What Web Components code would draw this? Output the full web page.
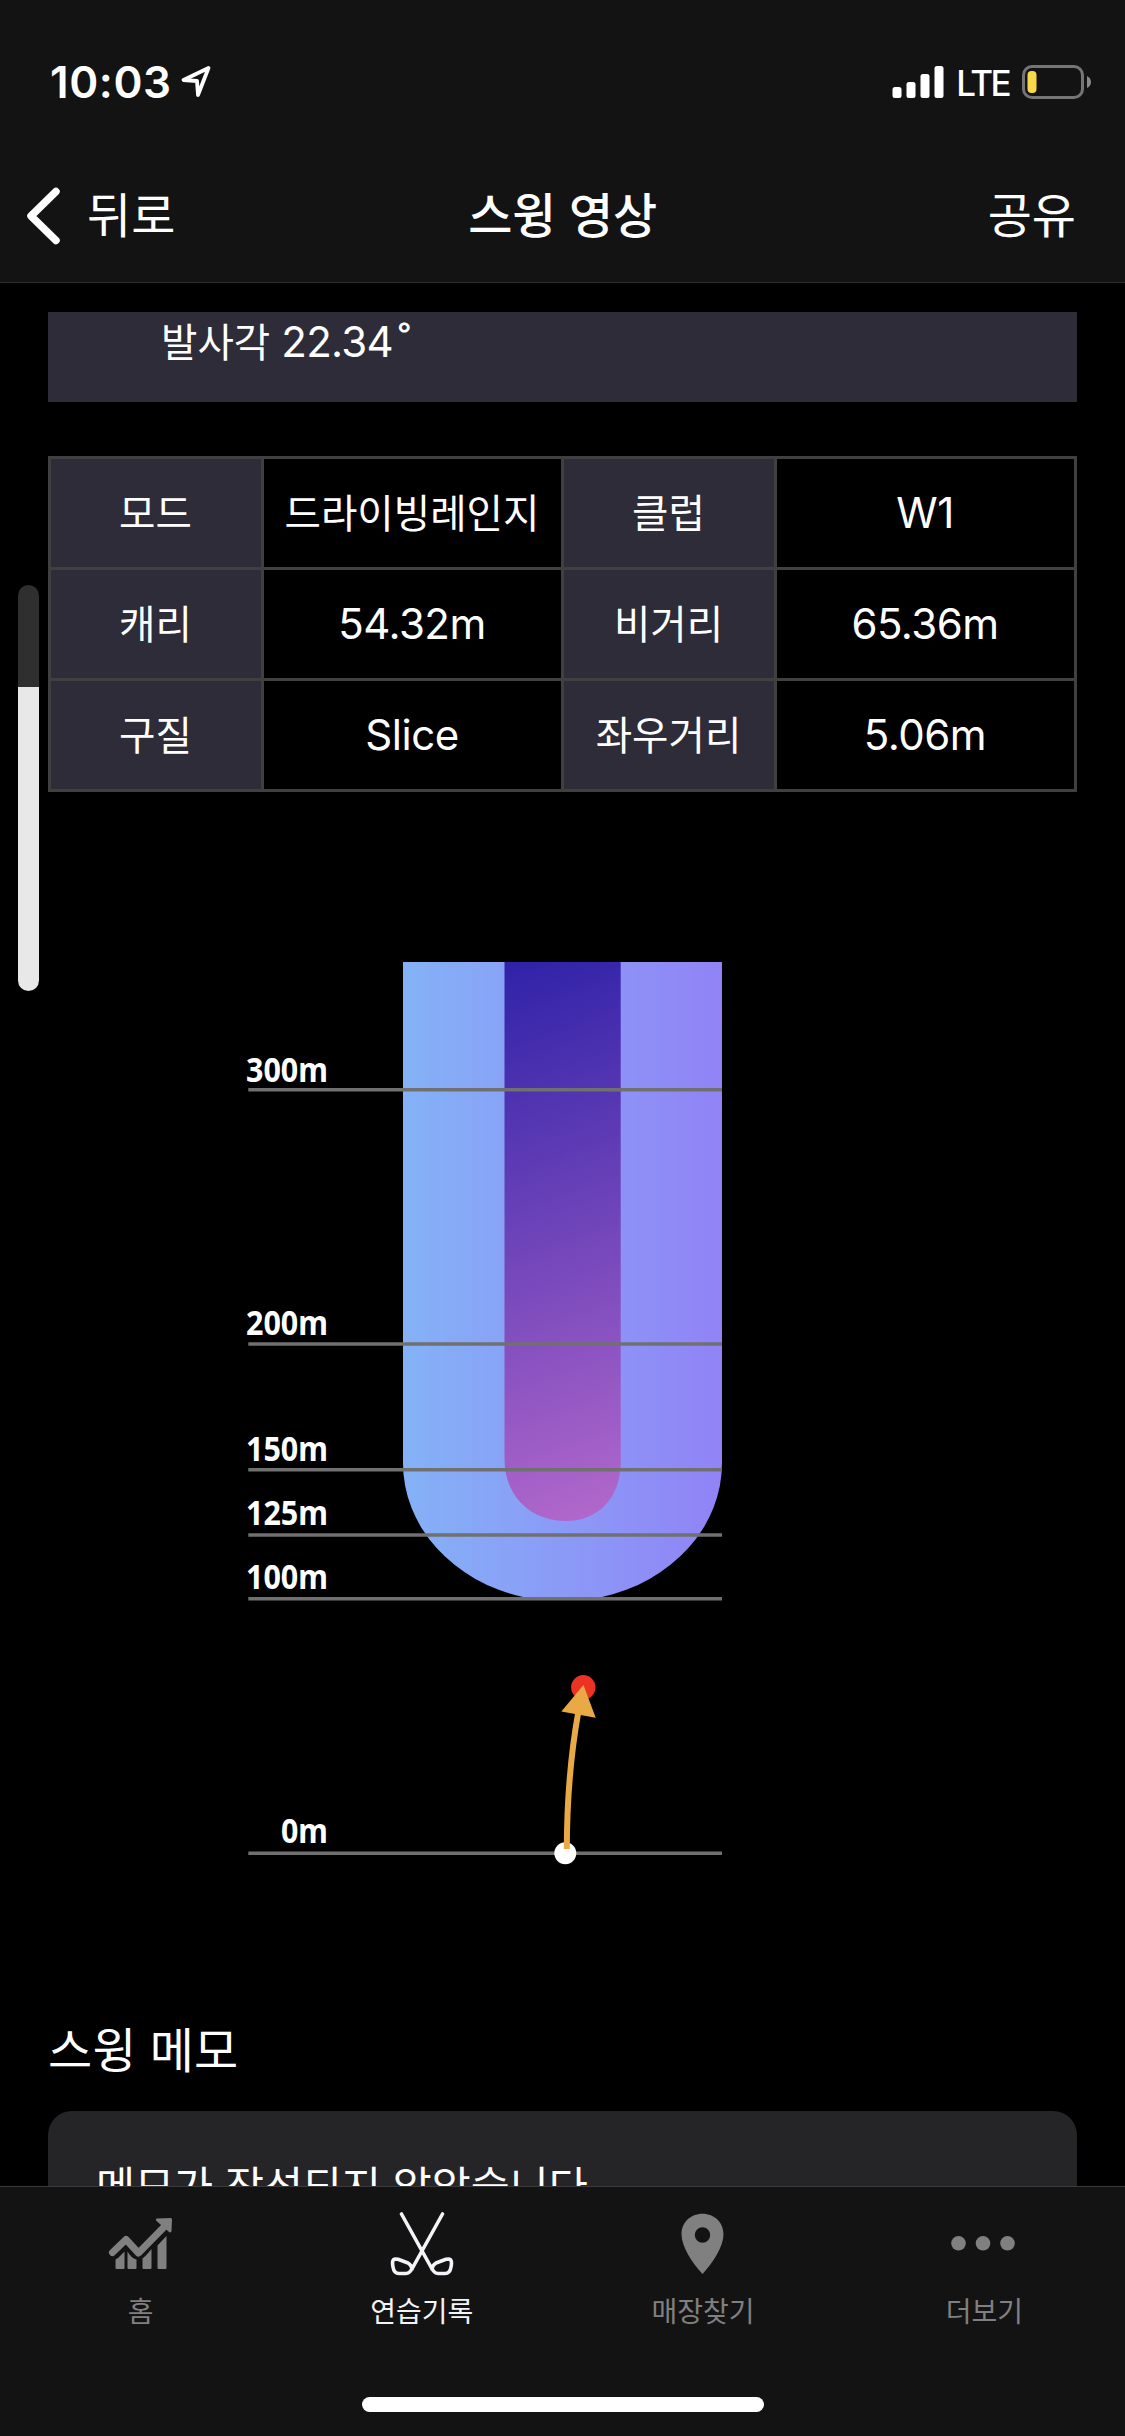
<!DOCTYPE html>
<html lang="ko">
<head>
<meta charset="utf-8">
<title>스윙 영상</title>
<style>
  html, body {
    margin: 0;
    background: #000;
  }
  body {
    width: 1125px;
    height: 2436px;
    overflow: hidden;
    color: #fff;
    font-family: Inter, "Noto Sans CJK KR", sans-serif;
  }
</style>
</head>
<body>
<swing-app>
  <status-bar slot="top" time="10:03" network="LTE"></status-bar>
  <nav-bar slot="top">
    <span slot="back">뒤로</span>
    <span slot="title">스윙 영상</span>
    <span slot="action">공유</span>
  </nav-bar>

  <info-panel label="발사각" value="22.34" unit="˚"></info-panel>
  <shot-table>
    <shot-cell head>모드</shot-cell>
    <shot-cell>드라이빙레인지</shot-cell>
    <shot-cell head>클럽</shot-cell>
    <shot-cell latin>W1</shot-cell>
    <shot-cell head>캐리</shot-cell>
    <shot-cell latin>54.32m</shot-cell>
    <shot-cell head>비거리</shot-cell>
    <shot-cell latin>65.36m</shot-cell>
    <shot-cell head>구질</shot-cell>
    <shot-cell latin>Slice</shot-cell>
    <shot-cell head>좌우거리</shot-cell>
    <shot-cell latin>5.06m</shot-cell>
  </shot-table>
  <distance-chart></distance-chart>
  <memo-card>
    <span slot="title">스윙 메모</span>
    메모가 작성되지 않았습니다.
  </memo-card>

  <tab-bar slot="bottom">
    <tab-item icon="home">홈</tab-item>
    <tab-item icon="clubs" active>연습기록</tab-item>
    <tab-item icon="pin">매장찾기</tab-item>
    <tab-item icon="more">더보기</tab-item>
  </tab-bar>
  <volume-hud slot="overlay"></volume-hud>
</swing-app>

<script>
class BaseElement extends HTMLElement {
  constructor() {
    super();
    this.attachShadow({mode: 'open'});
  }

  connectedCallback() {
    this.shadowRoot.innerHTML = this.render();
  }
}

class SwingApp extends BaseElement {
  render() {
    return `
      <style>
        :host {
          display: flex;
          flex-direction: column;
          position: relative;
          width: 1125px;
          height: 2436px;
          overflow: hidden;
        }
        header {
          flex: none;
          height: 282px;
          background: #131313;
          border-bottom: 1px solid #2b2b2b;
        }
        main {
          flex: 1;
          min-height: 0;
          overflow: hidden;
          padding: 29px 48px 0;
        }
      </style>
      <header><slot name="top"></slot></header>
      <main><slot></slot></main>
      <slot name="bottom"></slot>
      <slot name="overlay"></slot>
    `;
  }
}

class StatusBar extends BaseElement {
  render() {
    return `
      <style>
        :host {
          display: flex;
          justify-content: space-between;
          align-items: center;
          box-sizing: border-box;
          height: 132px;
          padding: 32px 34px 0 50px;
        }
        div {
          display: flex;
          align-items: center;
        }
        .time {
          font-size: 44px;
          font-weight: 600;
          line-height: 56px;
          letter-spacing: 0.6px;
        }
        .network {
          margin: 2px 13px 0 12px;
          font-size: 35px;
          font-weight: 500;
          letter-spacing: -2.6px;
          line-height: 48px;
        }
        svg { display: block; }
        .arrow { margin-left: 8px; }
      </style>
      <div>
        <span class="time">${this.getAttribute('time')}</span>
        <svg class="arrow" width="32" height="34" viewBox="0 0 32 34">
          <path d="M28.500 3 L3.500 15 L17 16 L18 30 Z" fill="none" stroke="#fff" stroke-width="3.800" stroke-linejoin="round"/>
        </svg>
      </div>
      <div>
        <svg width="52" height="34" viewBox="0 0 52 34" fill="#fff">
          <rect x="0.500" y="22" width="9" height="11" rx="2.500"/>
          <rect x="14.500" y="17" width="9" height="16" rx="2.500"/>
          <rect x="28.500" y="9" width="9" height="24" rx="2.500"/>
          <rect x="42.500" y="1" width="9" height="32" rx="2.500"/>
        </svg>
        <span class="network">${this.getAttribute('network')}</span>
        <svg width="69" height="34" viewBox="0 0 69 34">
          <rect x="1.500" y="1.500" width="59" height="31" rx="8.500" fill="none" stroke="#757575" stroke-width="3"/>
          <rect x="5.500" y="6" width="9" height="22" rx="4" fill="#f8d74a"/>
          <path d="M65 11 Q69 13 69 17 Q69 21 65 23 Z" fill="#8a8a8a"/>
        </svg>
      </div>
    `;
  }
}

class NavBar extends BaseElement {
  render() {
    return `
      <style>
        :host {
          display: grid;
          grid-template-columns: 1fr auto 1fr;
          align-items: center;
          box-sizing: border-box;
          height: 150px;
          padding: 10px 49px 0;
          font-size: 48px;
          line-height: 72px;
          font-family: "Noto Sans CJK KR", sans-serif;
        }
        .back {
          display: flex;
          align-items: center;
          gap: 26px;
          margin-left: -23px;
        }
        .title {
          font-weight: 500;
          letter-spacing: -0.3px;
        }
        .action { text-align: right; }
        svg { display: block; margin-top: 8px; }
      </style>
      <div class="back">
        <svg width="35" height="58" viewBox="0 0 35 58">
          <path d="M30 4.500 L5 29 L30 53.500" fill="none" stroke="#fff" stroke-width="7.500" stroke-linecap="round" stroke-linejoin="round"/>
        </svg>
        <slot name="back"></slot>
      </div>
      <div class="title"><slot name="title"></slot></div>
      <div class="action"><slot name="action"></slot></div>
    `;
  }
}

class InfoPanel extends BaseElement {
  render() {
    return `
      <style>
        :host {
          display: block;
          box-sizing: border-box;
          height: 90px;
          padding-left: 113px;
          background: #2d2c38;
          font-size: 39.6px;
          line-height: 60px;
        }
        .value {
          margin-left: 11px;
          font-size: 42px;
          letter-spacing: -0.7px;
        }
        .unit {
          margin-left: 5px;
          font-size: 42px;
        }
      </style>
      <span>${this.getAttribute('label')}</span><span class="value">${this.getAttribute('value')}</span><span class="unit">${this.getAttribute('unit')}</span>
    `;
  }
}

class ShotTable extends BaseElement {
  render() {
    return `
      <style>
        :host {
          display: grid;
          grid-template-columns: 210px 297px 210px 297px;
          grid-auto-rows: 108px;
          gap: 3px;
          padding: 3px;
          margin-top: 54px;
          background: #404040;
        }
      </style>
      <slot></slot>
    `;
  }
}

class ShotCell extends BaseElement {
  render() {
    return `
      <style>
        :host {
          display: flex;
          align-items: center;
          justify-content: center;
          padding: 0 1px 5px 0;
          box-sizing: border-box;
          background: #000;
          font-size: 39.6px;
          white-space: nowrap;
        }
        :host([head]) { background: #2d2c38; }
        :host([latin]) {
          padding-bottom: 1px;
          font-size: 42px;
          letter-spacing: -0.5px;
        }
      </style>
      <slot></slot>
    `;
  }
}

class DistanceChart extends BaseElement {
  constructor() {
    super();
    // y of the guide line and of the label's baseline, from the top of the fairway
    this.marks = [
      {label: '300m', line: 127.8, base: 119.5},
      {label: '200m', line: 382, base: 372.5},
      {label: '150m', line: 507.7, base: 499.2},
      {label: '125m', line: 573, base: 563.2},
      {label: '100m', line: 636.7, base: 627.2},
      {label: '0m', line: 891.3, base: 881.2},
    ];
  }

  render() {
    const marks = this.marks.map(({label, line, base}) => `
      <line x1="0.300" x2="474" y1="${line}" y2="${line}"/>
      <text x="80" y="${base}" textLength="${label.length === 4 ? 82 : 47}" lengthAdjust="spacingAndGlyphs">${label}</text>
    `).join('');

    return `
      <style>
        :host {
          display: block;
          padding: 170px 0 0 200px;
          height: 930px;
        }
        svg { display: block; overflow: visible; }
        line { stroke: #707070; stroke-width: 3.6; }
        text {
          fill: #fff;
          font: 700 34px "Noto Sans", sans-serif;
          text-anchor: end;
        }
      </style>
      <svg width="474" height="910" viewBox="0 0 474 910">
        <defs>
          <linearGradient id="outer">
            <stop offset="0" stop-color="#84b2f6"/>
            <stop offset="1" stop-color="#9183f6"/>
          </linearGradient>
          <linearGradient id="inner" gradientUnits="userSpaceOnUse" x1="256" y1="0" x2="443" y2="534">
            <stop offset="0" stop-color="#2f22a8"/>
            <stop offset="1" stop-color="#b469cc"/>
          </linearGradient>
        </defs>
        <path fill="url(#outer)" d="M155 0 H474 V501 A159.500 138 0 0 1 354 635 L346 637 H284 L275 635 A159.500 138 0 0 1 155 501 Z"/>
        <path fill="url(#inner)" d="M256.500 0 H372.700 V500 C372.700 536 350 559 318 559 C281 559 256.500 533 256.500 497 Z"/>
        ${marks}
        <circle cx="317.300" cy="891.300" r="11" fill="#fff"/>
        <circle cx="335.300" cy="725.300" r="12.200" fill="#ea3323"/>
        <path d="M318.800 887 Q319 813 330.300 750" fill="none" stroke="#e9a944" stroke-width="6"/>
        <path d="M335.500 723 L313.300 749.500 L347.700 755.700 Z" fill="#e9a944"/>
      </svg>
    `;
  }
}

class MemoCard extends BaseElement {
  render() {
    return `
      <style>
        :host { display: block; }
        h2 {
          margin: 0;
          padding-top: 123px;
          font-size: 48px;
          font-weight: 400;
          line-height: 72px;
        }
        .card {
          height: 200px;
          margin-top: 24px;
          padding: 46px 48px;
          border-radius: 24px;
          background: #252527;
          font-size: 42.4px;
          line-height: 60px;
        }
      </style>
      <h2><slot name="title"></slot></h2>
      <div class="card"><slot></slot></div>
    `;
  }
}

class TabBar extends BaseElement {
  render() {
    return `
      <style>
        :host {
          display: flex;
          flex-direction: column;
          justify-content: space-between;
          align-items: center;
          flex: none;
          box-sizing: border-box;
          height: 250px;
          padding-bottom: 24px;
          border-top: 1px solid #3a3a3c;
          background: #131313;
        }
        nav {
          display: grid;
          grid-template-columns: repeat(4, 1fr);
          width: 100%;
        }
        .indicator {
          width: 402px;
          height: 15px;
          border-radius: 8px;
          background: #fff;
        }
      </style>
      <nav><slot></slot></nav>
      <div class="indicator"></div>
    `;
  }
}

const icons = {
  home: `
    <path d="M9.500 40.500 L23 27.500 L35.500 41 L62 14" fill="none" stroke="currentColor" stroke-width="7" stroke-linecap="round" stroke-linejoin="round"/>
    <path d="M54 6.500 L67.500 6 Q69 6 69 7.500 L68.500 19 Q68 21.500 65.500 19.500 L53.500 9 Q52 6.800 54 6.500 Z"/>
    <path d="M12.500 47.500 L15 46 L21.500 39.500 V56 Q21.500 57 20.500 57 H13.500 Q12.500 57 12.500 56 Z M24.500 39.500 Q28 46 33.500 47.500 V56 Q33.500 57 32.500 57 H25.500 Q24.500 57 24.500 56 Z M39.500 46.500 Q42 45 48.500 37 V56 Q48.500 57 47.500 57 H40.500 Q39.500 57 39.500 56 Z M54.500 33.500 L63.500 24 V56 Q63.500 57 62.500 57 H55.500 Q54.500 57 54.500 56 Z"/>
  `,
  clubs: `
    <g fill="none" stroke="currentColor" stroke-width="3.600" stroke-linecap="round" stroke-linejoin="round">
      <path d="M17.500 2 L47.500 56 Q50.500 61.500 54 61.500 H61 Q66 61.500 67 55 Q68.500 47.500 65 47 L62 47.300 L52 51 Q48.500 53 48 57"/>
      <path d="M58.500 2 L28.500 56 Q25.500 61.500 22 61.500 H15 Q10 61.500 9 55 Q7.500 47.500 11 47 L14 47.300 L24 51 Q27.500 53 28 57"/>
    </g>
  `,
  pin: `<path fill-rule="evenodd" d="M36.500 1.700 C24.500 1.700 15.500 10.500 15.500 22 C15.500 35 26 50.500 36.500 62 C47 50.500 57.500 35 57.500 22 C57.500 10.500 48.500 1.700 36.500 1.700 Z M36.500 15.300 A7.700 7.700 0 1 1 36.500 30.700 A7.700 7.700 0 1 1 36.500 15.300 Z"/>`,
  more: `<circle cx="11.500" cy="31.300" r="7.300"/><circle cx="36" cy="31.300" r="7.300"/><circle cx="60.500" cy="31.300" r="7.300"/>`
};

class TabItem extends BaseElement {
  render() {
    return `
      <style>
        :host {
          display: flex;
          flex-direction: column;
          align-items: center;
          padding-top: 25px;
          color: #808080;
          font-size: 28px;
          line-height: 40px;
        }
        :host([active]) { color: #f4f4f8; }
        svg { display: block; margin-bottom: 16px; }
      </style>
      <svg width="75" height="64" viewBox="0 0 75 64" fill="currentColor">${icons[this.getAttribute('icon')]}</svg>
      <slot></slot>
    `;
  }
}

class VolumeHud extends BaseElement {
  render() {
    return `
      <style>
        :host {
          position: absolute;
          left: 18px;
          top: 585px;
          width: 21px;
          height: 406px;
          border-radius: 10.5px;
          background: linear-gradient(#2f2f2f 102px, #e8e8e8 102px);
        }
      </style>
    `;
  }
}

window.customElements.define('swing-app', SwingApp);
window.customElements.define('status-bar', StatusBar);
window.customElements.define('nav-bar', NavBar);
window.customElements.define('info-panel', InfoPanel);
window.customElements.define('shot-table', ShotTable);
window.customElements.define('shot-cell', ShotCell);
window.customElements.define('distance-chart', DistanceChart);
window.customElements.define('memo-card', MemoCard);
window.customElements.define('tab-bar', TabBar);
window.customElements.define('tab-item', TabItem);
window.customElements.define('volume-hud', VolumeHud);
</script>
</body>
</html>
